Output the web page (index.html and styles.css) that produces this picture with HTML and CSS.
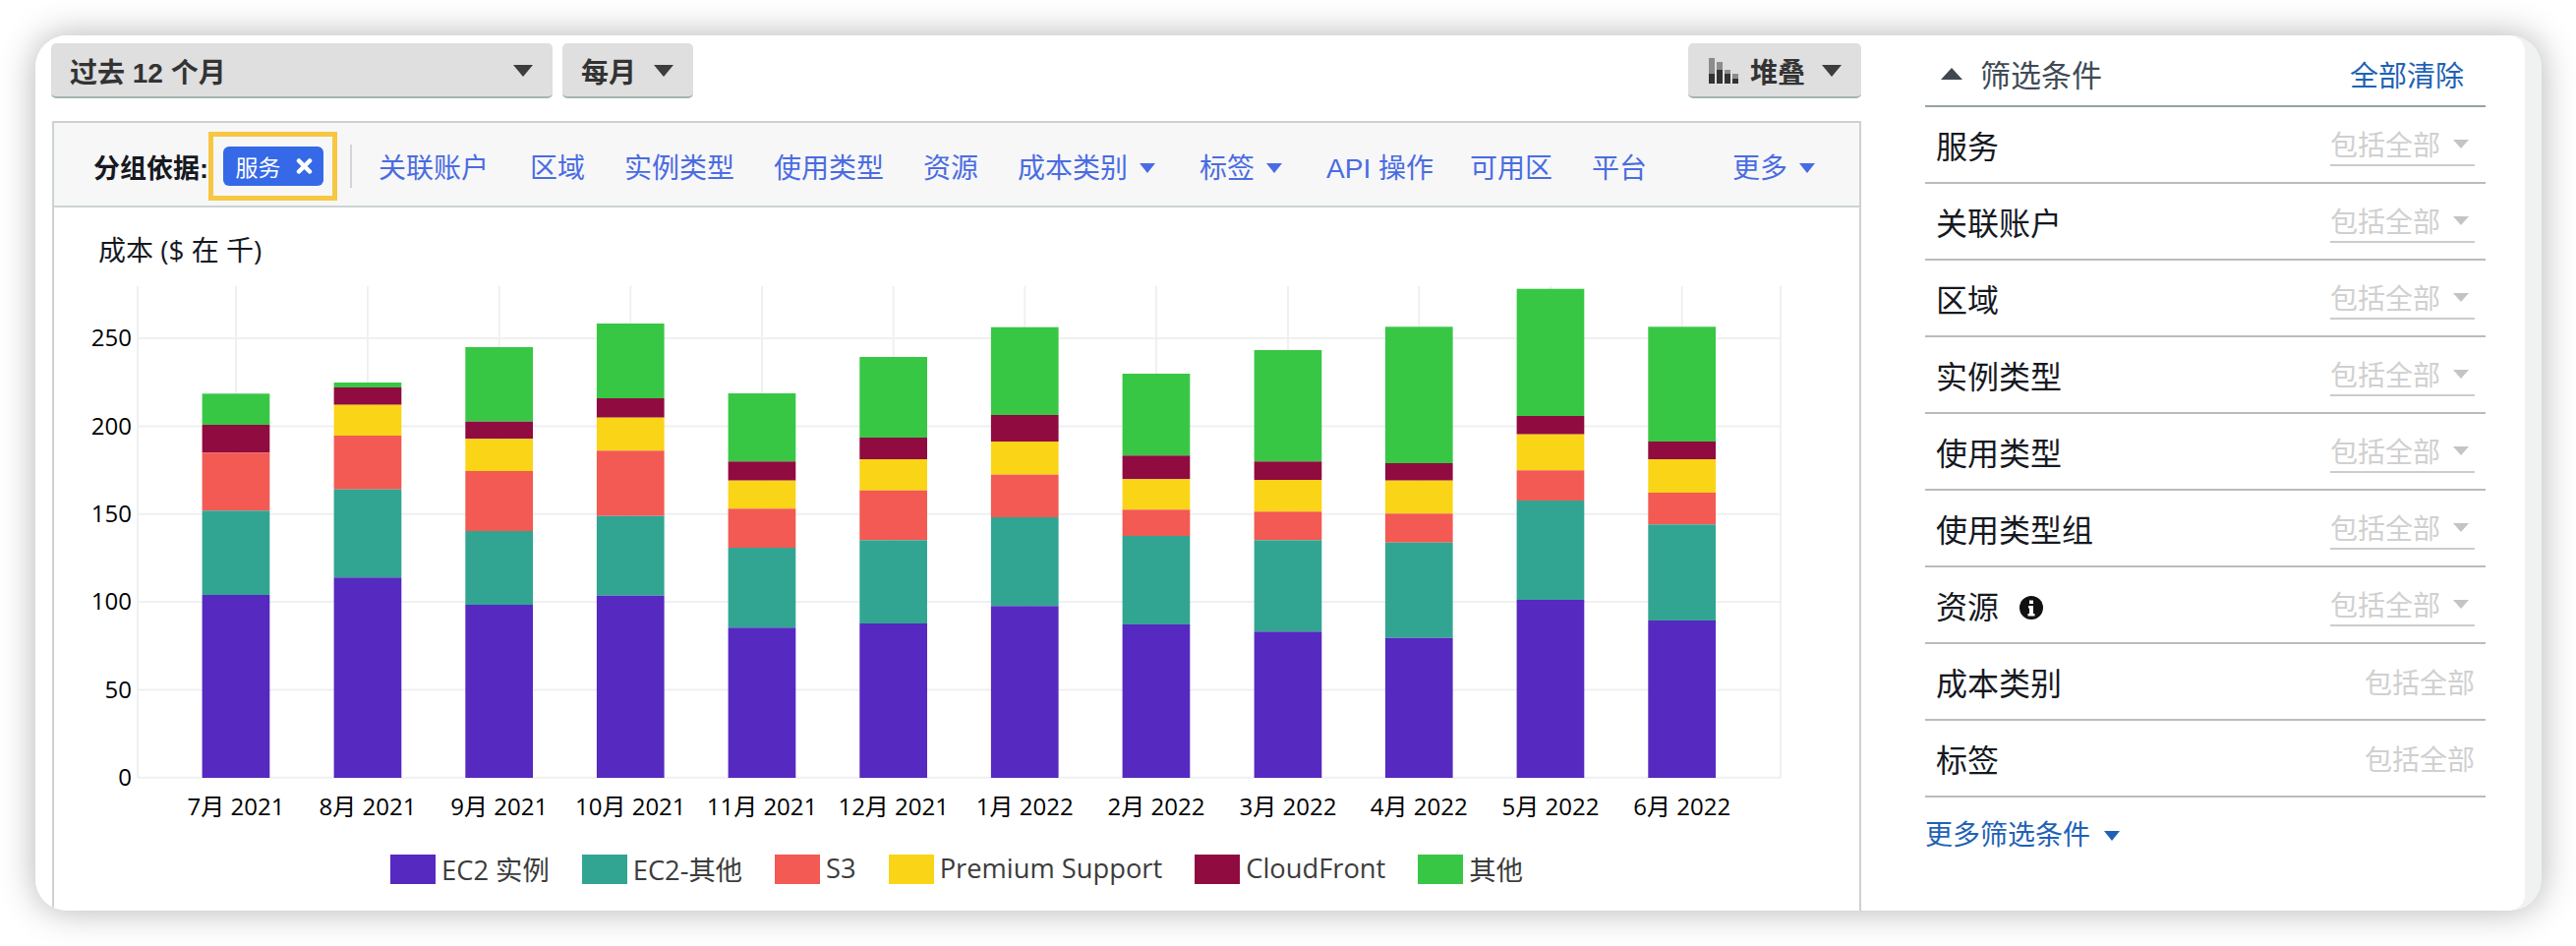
FILE: index.html
```html
<!DOCTYPE html>
<html lang="zh-CN">
<head>
  <meta charset="UTF-8" />
  <title>成本管理器</title>
  <link rel="stylesheet" href="styles.css">
</head>
<body>
  <div class="window">
    <div class="content">
      <main class="main">
        <div class="toolbar">
          <div class="btn btn-range"><span>过去 12 个月</span><i class="caret-dark"></i></div>
          <div class="btn btn-period"><span>每月</span><i class="caret-dark"></i></div>
          <div class="btn btn-type">
            <svg class="type-icon" width="31" height="26" viewBox="0 0 31 26">
              <path class="type-light" d="M0 0h6v26H0zM8 4h6v22H8zM16 12h6v14h-6zM24 16h6v10h-6z"/>
              <path class="type-dark" d="M0 16h6v10H0zM8 12h6v14H8zM16 16h6v10h-6zM24 21h6v5h-6z"/>
            </svg>
            <span>堆叠</span><i class="caret-dark"></i>
          </div>
        </div>

        <div class="groupbar">
          <span class="group-label">分组依据:</span>
          <div class="highlight">
            <div class="chip">
              <span>服务</span>
              <svg width="17" height="16" viewBox="0 0 17 16"><path d="M3 2.5l11 11M14 2.5l-11 11"/></svg>
            </div>
          </div>
          <div class="sep"></div>
          <a class="link link-first">关联账户</a>
          <a class="link">区域</a>
          <a class="link">实例类型</a>
          <a class="link">使用类型</a>
          <a class="link">资源</a>
          <a class="link">成本类别<i class="caret-blue"></i></a>
          <a class="link">标签<i class="caret-blue"></i></a>
          <a class="link link-api">API 操作</a>
          <a class="link">可用区</a>
          <a class="link">平台</a>
          <a class="link link-more">更多<i class="caret-blue"></i></a>
        </div>

        <div class="chart-panel">
          <div class="chart-title">成本 ($ 在 千)</div>
          <svg class="chart" width="1837" height="578" viewBox="55 272 1837 578">
            <path class="grid" d="M140 291V791M240 291V791M374 291V791M507.7 291V791M641.3 291V791M775 291V791M908.7 291V791M1042.3 291V791M1176 291V791M1310 291V791M1443.3 291V791M1577 291V791M1710.7 291V791M1811 291V791"/>
            <path class="grid" d="M140 344H1812M140 433.5H1812M140 522.7H1812M140 612H1812M140 701.5H1812M140 790.7H1812"/>

            <g class="bar" transform="translate(205.6 0)">
              <rect class="other" y="400.3" height="31.7"/><rect class="cf" y="432" height="28.3"/><rect class="s3" y="460.3" height="59"/><rect class="ec2o" y="519.3" height="85.7"/><rect class="ec2" y="605" height="186"/>
            </g>
            <g class="bar" transform="translate(339.6 0)">
              <rect class="other" y="389" height="5"/><rect class="cf" y="394" height="17.7"/><rect class="sup" y="411.7" height="31.3"/><rect class="s3" y="443" height="54.7"/><rect class="ec2o" y="497.7" height="89.6"/><rect class="ec2" y="587.3" height="203.7"/>
            </g>
            <g class="bar" transform="translate(473.3 0)">
              <rect class="other" y="353" height="75.7"/><rect class="cf" y="428.7" height="17.6"/><rect class="sup" y="446.3" height="32.7"/><rect class="s3" y="479" height="61"/><rect class="ec2o" y="540" height="75"/><rect class="ec2" y="615" height="176"/>
            </g>
            <g class="bar" transform="translate(606.9 0)">
              <rect class="other" y="329" height="76"/><rect class="cf" y="405" height="19.7"/><rect class="sup" y="424.7" height="33.6"/><rect class="s3" y="458.3" height="66.4"/><rect class="ec2o" y="524.7" height="81"/><rect class="ec2" y="605.7" height="185.3"/>
            </g>
            <g class="bar" transform="translate(740.6 0)">
              <rect class="other" y="400" height="69.3"/><rect class="cf" y="469.3" height="19.4"/><rect class="sup" y="488.7" height="28.6"/><rect class="s3" y="517.3" height="39.7"/><rect class="ec2o" y="557" height="81.3"/><rect class="ec2" y="638.3" height="152.7"/>
            </g>
            <g class="bar" transform="translate(874.3 0)">
              <rect class="other" y="363" height="82"/><rect class="cf" y="445" height="22"/><rect class="sup" y="467" height="31.7"/><rect class="s3" y="498.7" height="50.6"/><rect class="ec2o" y="549.3" height="84.7"/><rect class="ec2" y="634" height="157"/>
            </g>
            <g class="bar" transform="translate(1007.9 0)">
              <rect class="other" y="332.7" height="89.3"/><rect class="cf" y="422" height="27"/><rect class="sup" y="449" height="33.7"/><rect class="s3" y="482.7" height="43.3"/><rect class="ec2o" y="526" height="90.3"/><rect class="ec2" y="616.3" height="174.7"/>
            </g>
            <g class="bar" transform="translate(1141.6 0)">
              <rect class="other" y="380" height="83.3"/><rect class="cf" y="463.3" height="24"/><rect class="sup" y="487.3" height="31"/><rect class="s3" y="518.3" height="26.7"/><rect class="ec2o" y="545" height="90"/><rect class="ec2" y="635" height="156"/>
            </g>
            <g class="bar" transform="translate(1275.6 0)">
              <rect class="other" y="356" height="113.3"/><rect class="cf" y="469.3" height="18.7"/><rect class="sup" y="488" height="32.3"/><rect class="s3" y="520.3" height="29"/><rect class="ec2o" y="549.3" height="93"/><rect class="ec2" y="642.3" height="148.7"/>
            </g>
            <g class="bar" transform="translate(1408.9 0)">
              <rect class="other" y="332.3" height="138.7"/><rect class="cf" y="471" height="17.7"/><rect class="sup" y="488.7" height="33.6"/><rect class="s3" y="522.3" height="29.4"/><rect class="ec2o" y="551.7" height="97"/><rect class="ec2" y="648.7" height="142.3"/>
            </g>
            <g class="bar" transform="translate(1542.6 0)">
              <rect class="other" y="293.7" height="129.3"/><rect class="cf" y="423" height="18.7"/><rect class="sup" y="441.7" height="36.6"/><rect class="s3" y="478.3" height="30.7"/><rect class="ec2o" y="509" height="101"/><rect class="ec2" y="610" height="181"/>
            </g>
            <g class="bar" transform="translate(1676.3 0)">
              <rect class="other" y="332.3" height="116.7"/><rect class="cf" y="449" height="18"/><rect class="sup" y="467" height="34"/><rect class="s3" y="501" height="32.3"/><rect class="ec2o" y="533.3" height="97.7"/><rect class="ec2" y="631" height="160"/>
            </g>

            <g class="y-labels">
              <text x="134" y="352">250</text>
              <text x="134" y="441.5">200</text>
              <text x="134" y="531">150</text>
              <text x="134" y="620">100</text>
              <text x="134" y="710">50</text>
              <text x="134" y="799">0</text>
            </g>
            <g class="x-labels">
              <text x="240" y="829">7月 2021</text>
              <text x="374" y="829">8月 2021</text>
              <text x="507.7" y="829">9月 2021</text>
              <text x="641.3" y="829">10月 2021</text>
              <text x="775" y="829">11月 2021</text>
              <text x="908.7" y="829">12月 2021</text>
              <text x="1042.3" y="829">1月 2022</text>
              <text x="1176" y="829">2月 2022</text>
              <text x="1310" y="829">3月 2022</text>
              <text x="1443.3" y="829">4月 2022</text>
              <text x="1577" y="829">5月 2022</text>
              <text x="1710.7" y="829">6月 2022</text>
            </g>
          </svg>

          <div class="legend">
            <div class="legend-item"><span class="swatch sw-ec2"></span><span class="legend-text">EC2 实例</span></div>
            <div class="legend-item"><span class="swatch sw-ec2o"></span><span class="legend-text">EC2-其他</span></div>
            <div class="legend-item"><span class="swatch sw-s3"></span><span class="legend-text">S3</span></div>
            <div class="legend-item"><span class="swatch sw-sup"></span><span class="legend-text">Premium Support</span></div>
            <div class="legend-item"><span class="swatch sw-cf"></span><span class="legend-text">CloudFront</span></div>
            <div class="legend-item"><span class="swatch sw-other"></span><span class="legend-text">其他</span></div>
          </div>
        </div>
      </main>

      <aside class="sidebar">
        <div class="filter-head">
          <div class="filter-title"><i class="caret-up"></i>筛选条件</div>
          <a class="clear-all">全部清除</a>
        </div>
        <div class="row"><span>服务</span><div class="value">包括全部<i class="caret-grey"></i></div></div>
        <div class="row"><span>关联账户</span><div class="value">包括全部<i class="caret-grey"></i></div></div>
        <div class="row"><span>区域</span><div class="value">包括全部<i class="caret-grey"></i></div></div>
        <div class="row"><span>实例类型</span><div class="value">包括全部<i class="caret-grey"></i></div></div>
        <div class="row"><span>使用类型</span><div class="value">包括全部<i class="caret-grey"></i></div></div>
        <div class="row"><span>使用类型组</span><div class="value">包括全部<i class="caret-grey"></i></div></div>
        <div class="row">
          <span class="with-info">资源
            <svg class="info" width="24" height="24" viewBox="0 0 24 24">
              <circle cx="12" cy="12" r="12"/>
              <path d="M10 4.5h4v3.5h-4zM9 10h5v8h1.5v2.5h-7V18H10v-5.500H9z"/>
            </svg>
          </span>
          <div class="value">包括全部<i class="caret-grey"></i></div>
        </div>
        <div class="row"><span>成本类别</span><div class="value value-plain">包括全部</div></div>
        <div class="row"><span>标签</span><div class="value value-plain">包括全部</div></div>
        <a class="more-filters">更多筛选条件<i class="caret-link"></i></a>
      </aside>
    </div>
  </div>
</body>
</html>
```

FILE: styles.css
```css
* {
  box-sizing: border-box;
}
html, body {
  margin: 0;
  height: 100%;
  background: #fff;
  overflow: hidden;
}
body {
  padding: 36px 35px 36px 36px;
  font-family: "Liberation Sans", "Noto Sans CJK SC", sans-serif;
  color: #16191f;
}
i {
  display: inline-block;
  width: 0;
  height: 0;
  font-style: normal;
}

.window {
  height: 890px;
  border-radius: 32px;
  background: #f0f1f1;
  box-shadow: 0 0 36px rgba(0,0,0,0.3);
  overflow: hidden;
  padding-right: 17px;
}
.content {
  display: flex;
  height: 100%;
  background: #fff;
  border-radius: 0 16px 16px 0;
}

/* left column */
.main {
  width: 1857px;
  padding: 8px 0 0 16px;
}
.toolbar {
  display: flex;
  gap: 10px;
  height: 56px;
  margin-bottom: 23px;
}
.btn {
  display: flex;
  align-items: center;
  justify-content: space-between;
  height: 56px;
  padding: 1px 20px 0 19px;
  background: #dfdfdf;
  border-bottom: 2px solid #a3b4b2;
  border-radius: 5px;
  font-size: 28px;
  font-weight: 700;
  color: #333;
}
.btn-range {
  width: 510px;
}
.btn-period {
  width: 133px;
}
.btn-type {
  justify-content: flex-start;
  gap: 11px;
  margin-left: auto;
  width: 176px;
  padding-left: 21px;
}
.btn-type .caret-dark {
  margin-left: auto;
}
.type-icon {
  flex: none;
}
.type-light {
  fill: #8c8c8c;
}
.type-dark {
  fill: #333;
}
.caret-dark {
  border-left: 10px solid transparent;
  border-right: 10px solid transparent;
  border-top: 12px solid #3d3d3d;
}

.groupbar {
  display: flex;
  align-items: center;
  height: 88px;
  margin-left: 1px;
  padding: 4px 40px 0 40px;
  background: #f7f7f7;
  border: 2px solid #ccd2d2;
  font-size: 28px;
}
.group-label {
  width: 117px;
  font-size: 27px;
  font-weight: 700;
  white-space: nowrap;
}
.highlight {
  display: flex;
  align-items: center;
  justify-content: center;
  width: 131px;
  height: 70px;
  border: 5px solid #f7c744;
}
.chip {
  display: flex;
  align-items: center;
  justify-content: space-between;
  width: 102px;
  height: 40px;
  padding: 0 11px 0 13px;
  background: #3569e7;
  border-radius: 6px;
  color: #fff;
  font-size: 23px;
}
.chip svg {
  stroke: #fff;
  stroke-width: 4.5;
  stroke-linecap: round;
}
.sep {
  width: 2px;
  height: 44px;
  margin: 0 27px 0 13px;
  background: #d3d6d6;
}
.link {
  margin-right: 40px;
  color: #4a6ce2;
  white-space: nowrap;
}
.link-first {
  margin-right: 42px;
}
.link-api {
  margin-right: 37px;
}
.link-more {
  margin-left: auto;
  margin-right: 0;
}
.caret-blue {
  margin: 0 5px 5px 12px;
  border-left: 8px solid transparent;
  border-right: 8px solid transparent;
  border-top: 10px solid #4a6ce2;
}

.chart-panel {
  height: 715px;
  margin-left: 1px;
  padding-top: 25px;
  border-left: 2px solid #ccd2d2;
  border-right: 2px solid #ccd2d2;
}
.chart-title {
  height: 36px;
  margin-left: 45px;
  font-size: 28px;
  line-height: 36px;
  font-family: "Open Sans", "Noto Sans CJK SC", sans-serif;
}
.chart {
  display: block;
}
.grid {
  fill: none;
  stroke: #f0f0f0;
  stroke-width: 2;
}
.bar rect {
  width: 68.700px;
}
.ec2 { fill: #5629c0; }
.ec2o { fill: #31a592; }
.s3 { fill: #f25a53; }
.sup { fill: #fad417; }
.cf { fill: #900b3f; }
.other { fill: #38c745; }
.y-labels text,
.x-labels text {
  font-family: "Open Sans", "Noto Sans CJK SC", sans-serif;
  font-size: 24px;
  fill: #000;
}
.y-labels text {
  text-anchor: end;
}
.x-labels text {
  text-anchor: middle;
}

.legend {
  display: flex;
  justify-content: center;
  gap: 33px;
  margin-top: 19px;
  font-family: "Open Sans", "Noto Sans CJK SC", sans-serif;
  font-size: 27.300px;
  color: #3c3c3c;
}
.legend-item {
  display: flex;
  align-items: center;
  gap: 6px;
  height: 30px;
  white-space: nowrap;
}
.legend-text {
  margin-bottom: 3px;
}
.swatch {
  width: 46px;
  height: 30px;
}
.sw-ec2 { background: #5629c0; }
.sw-ec2o { background: #31a592; }
.sw-s3 { background: #f25a53; }
.sw-sup { background: #fad417; }
.sw-cf { background: #900b3f; }
.sw-other { background: #38c745; }

/* right column */
.sidebar {
  flex: 1;
  padding: 0 40px 0 65px;
}
.filter-head {
  display: flex;
  align-items: center;
  justify-content: space-between;
  height: 73px;
  padding: 6px 22px 0 16px;
  border-bottom: 2px solid #93a3a3;
}
.filter-title {
  display: flex;
  align-items: center;
  font-size: 31px;
  color: #3f4a55;
}
.caret-up {
  margin-right: 18px;
  border-left: 11px solid transparent;
  border-right: 11px solid transparent;
  border-bottom: 12px solid #414750;
}
.clear-all {
  font-size: 29px;
  color: #1f62b5;
}
.row {
  display: flex;
  align-items: center;
  justify-content: space-between;
  height: 78px;
  padding: 0 11px;
  border-bottom: 2px solid #bbb;
  font-size: 32px;
}
.with-info {
  display: flex;
  align-items: center;
}
.info {
  margin: 6px 0 0 21px;
}
.info circle {
  fill: #111;
}
.info path {
  fill: #fff;
}
.value {
  display: flex;
  align-items: center;
  justify-content: space-between;
  width: 147px;
  height: 43px;
  padding: 0 6px 0 0;
  border-bottom: 2px solid #ccc;
  font-size: 28px;
  color: #d0d0d0;
}
.value-plain {
  justify-content: flex-end;
  padding: 0;
  border-bottom: 0;
}
.caret-grey {
  border-left: 8px solid transparent;
  border-right: 8px solid transparent;
  border-top: 9px solid #c4c4c4;
}
.more-filters {
  display: flex;
  align-items: center;
  margin-top: 19px;
  line-height: 40px;
  font-size: 28px;
  color: #1f62b5;
}
.caret-link {
  margin-left: 14px;
  border-left: 8px solid transparent;
  border-right: 8px solid transparent;
  border-top: 10px solid #1f62b5;
}
```
